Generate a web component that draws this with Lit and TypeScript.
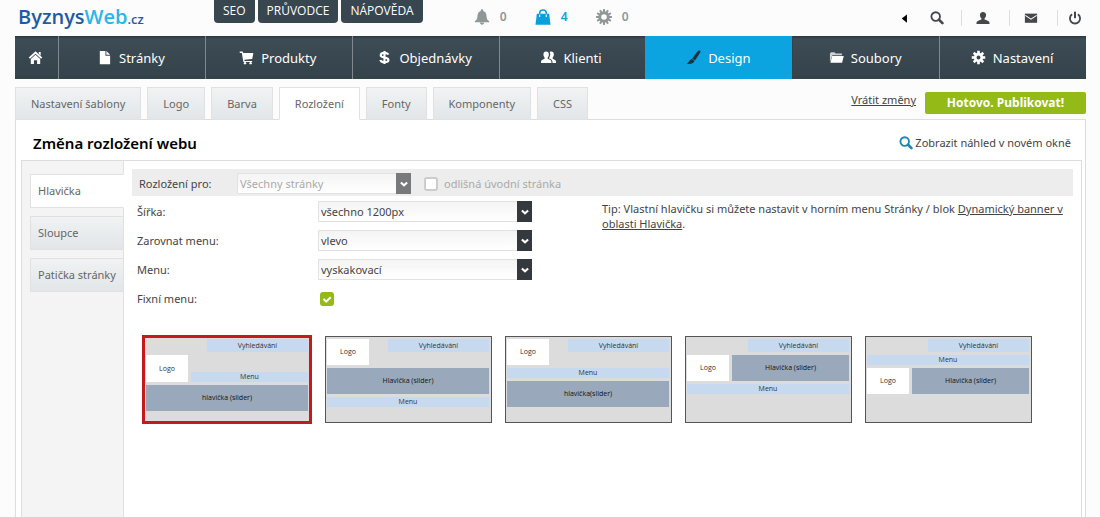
import { LitElement, html, css, svg, nothing } from "lit";
import { customElement, property, state } from "lit/decorators.js";
import { classMap } from "lit/directives/class-map.js";

const gearTeeth = (count: number, inner: number, outer: number, half: number) =>
  Array.from({ length: count }, (_, i) => {
    const a = (i * 360) / count;
    return svg`<rect x=${-half} y=${-outer} width=${half * 2} height=${outer - inner} transform="translate(8 8) rotate(${a})" />`;
  });

const icons: Record<string, unknown> = {
  home: svg`<path d="M8 1.2 15.2 8l-1.3 1.4L8 3.9 2.1 9.4.8 8z"/><path d="M8 5.1l5 4.6V15H9.7v-4H6.3v4H3V9.7z"/><path d="M11.5 2h2v4l-2-2z"/>`,
  page: svg`<path d="M3 1h6v5h5v9.2H3z"/><path d="M10 1l4 4h-4z"/>`,
  cart: svg`<path d="M.8 1.5h3l.9 1.8h10.6l-1.2 6.2-8.4.9.3 1.2h8v1.3H4.7L3 3.2H.8z"/><circle cx="6.4" cy="14" r="1.3"/><circle cx="12.4" cy="14" r="1.3"/>`,
  dollar: svg`<path d="M8 1v14M12 5C11.500 3.600 10 3 8 3 5.500 3 4 4 4 5.500 4 7.300 6 7.600 8 8c2.200.400 4.200.800 4.200 2.600C12.200 12.200 10.500 13 8 13c-2.300 0-4-.700-4.400-2.400" fill="none" stroke="currentColor" stroke-width="2.300"/>`,
  people: svg`<path d="M5.500 1.700c2 0 2.900 1.400 2.900 3.100 0 1.300-.5 2.400-1.200 3.100v1.300c1.600.7 3.300 1.200 3.700 2.300.2.700.2 1.500.2 2.300H0c0-.8 0-1.600.2-2.300.4-1.100 2-1.600 3.600-2.300V7.900C3.100 7.200 2.600 6.100 2.600 4.800c0-1.700.9-3.100 2.900-3.100z"/><path d="M9.300 2.100c.4-.3.900-.4 1.500-.4 2 0 2.900 1.400 2.900 3.100 0 1.300-.5 2.400-1.200 3.100v1.300c1.400.7 2.900 1.200 3.300 2.300.2.700.2 1.500.2 2.300h-3.700c0-3-.7-3.500-3.600-4.800V8.300c1.400-2 1.500-4.300.6-6.200z"/>`,
  brush: svg`<path d="M15 .8c.8.500.5 1.200 0 2.200l-5.200 8-3.400-1.800L12 1.900c1-1.100 2-1.800 3-1.100zM6 9.600l3.200 1.900C8 14.300 5 15.600.6 14.800c2.700-1 2.700-4.400 5.400-5.200z"/>`,
  folder: svg`<path d="M1 13V3.600L2.200 2.500h3.600l1.300 1.300h6.700V5.500H3.600z" opacity=".75"/><path d="M3.400 6.400h12.300L14 13.500H1.500z"/>`,
  gear: svg`<path fill-rule="evenodd" d="M8 3a5 5 0 100 10A5 5 0 008 3zm0 2.900a2.100 2.100 0 110 4.200 2.100 2.100 0 010-4.200z"/>${gearTeeth(8, 4, 7.2, 1.4)}`,
  cog: svg`<path fill-rule="evenodd" d="M8 2.200a5.800 5.800 0 100 11.600A5.800 5.800 0 008 2.200zm0 3a2.800 2.800 0 110 5.600 2.800 2.800 0 010-5.600z"/>${gearTeeth(12, 5, 7.900, 1)}`,
  bell: svg`<path d="M8 .3c.8 0 1.200.5 1.200 1.200v.4c2.300.6 3.200 2.500 3.300 5 .1 2.600.8 4 2.700 5.300v1H.8v-1c1.900-1.300 2.600-2.700 2.700-5.300.1-2.500 1-4.400 3.300-5v-.4C6.800.8 7.200.3 8 .3z"/><path d="M6 13.600h4c0 1.300-.8 2.100-2 2.100s-2-.8-2-2.100z"/>`,
  bag: svg`<path d="M1.800 4.800h12.400l1.300 11H.5z"/><path d="M4.700 7.400V3.900C4.700 1.900 6 .9 8 .9s3.300 1 3.300 3v3.500" fill="none" stroke="currentColor" stroke-width="1.500"/><path d="M4.700 5.400v2.600M11.300 5.400v2.600" stroke="#fcfcfc" stroke-width="1.100"/>`,
  left: svg`<path d="M11.500 2v12L4 8z"/>`,
  search: svg`<circle cx="6.500" cy="6.300" r="4.900" fill="none" stroke="currentColor" stroke-width="2.100"/><path d="M10.300 10l3.900 3.900" stroke="currentColor" stroke-width="3" stroke-linecap="round"/>`,
  user: svg`<path d="M8 1c2.300 0 3.500 1.500 3.500 3.500 0 1.700-.7 3.100-1.700 3.900v1.200c2.300 1 5 1.500 5.400 3 .2.700.3 1.500.3 2.200H.5c0-.7.1-1.500.3-2.200.4-1.500 3.100-2 5.400-3V8.400c-1-.8-1.700-2.200-1.700-3.900C4.500 2.500 5.700 1 8 1z"/>`,
  mail: svg`<path d="M1 3h14v10.500H1z"/><path d="M1.500 5L8 9.300 14.500 5" fill="none" stroke="#fcfcfc" stroke-width="1.200"/>`,
  power: svg`<path d="M4.700 3.700A5.800 5.800 0 1 0 11.300 3.700" fill="none" stroke="currentColor" stroke-width="2.100"/><path d="M8 .8v7.400" stroke="currentColor" stroke-width="2.300"/>`,
  chevron: svg`<path d="M3 5.500L8 10l5-4.500" fill="none" stroke="currentColor" stroke-width="3.400"/>`,
};

const icon = (name: string, cls = "") =>
  html`<svg class="icon ${cls}" viewBox="0 0 16 16" fill="currentColor" aria-hidden="true">${icons[name]}</svg>`;

const iconStyles = css`
  .icon {
    width: 16px;
    height: 16px;
    flex: none;
    display: block;
  }
`;

/** Miniature of one header arrangement; the variant picks the grid areas. */
@customElement("layout-thumb")
export class LayoutThumb extends LitElement {
  @property({ type: Number }) variant = 1;
  @property() slider = "Hlavička (slider)";

  static styles = css`
    :host {
      display: block;
    }
    .map {
      display: grid;
      grid-template-columns: 42px 3px 16px 1fr;
      row-gap: 3px;
      font-family: "Open Sans", sans-serif;
      font-size: 7px;
      line-height: 10px;
      color: #333;
    }
    .map > span {
      display: flex;
      align-items: center;
      justify-content: center;
    }
    .search { grid-area: search; background: #c6d9ee; }
    .logo { grid-area: logo; background: #fff; }
    .menu { grid-area: menu; background: #c6d9ee; }
    .slider { grid-area: slider; background: #99a8ba; color: #111; }
    .v1 {
      grid-template-rows: 13px 14px 10px 26px;
      grid-template-areas: ". . . search" "logo . . ." "logo . menu menu" "slider slider slider slider";
    }
    .v2 {
      grid-template-rows: 13px 10px 26px 10px;
      grid-template-areas: "logo . . search" "logo . . ." "slider slider slider slider" "menu menu menu menu";
    }
    .v3 {
      grid-template-rows: 13px 10px 10px 26px;
      grid-template-areas: "logo . . search" "logo . . ." "menu menu menu menu" "slider slider slider slider";
    }
    .v4 {
      grid-template-rows: 13px 26px 10px;
      grid-template-areas: ". . . search" "logo . slider slider" "menu menu menu menu";
    }
    .v5 {
      grid-template-rows: 13px 10px 26px;
      grid-template-areas: ". . . search" "menu menu menu menu" "logo . slider slider";
    }
  `;

  render() {
    return html`<div class="map v${this.variant}">
      <span class="search">Vyhledávání</span>
      <span class="logo">Logo</span>
      <span class="menu">Menu</span>
      <span class="slider">${this.slider}</span>
    </div>`;
  }
}

@customElement("app-root")
export class AppRoot extends LitElement {
  @state() private chosen = 1;

  private nav = [
    ["page", "Stránky"],
    ["cart", "Produkty"],
    ["dollar", "Objednávky"],
    ["people", "Klienti"],
    ["brush", "Design"],
    ["folder", "Soubory"],
    ["gear", "Nastavení"],
  ];
  private tabs = ["Nastavení šablony", "Logo", "Barva", "Rozložení", "Fonty", "Komponenty", "CSS"];
  private sections = ["Hlavička", "Sloupce", "Patička stránky"];
  private fields = [
    ["width", "Šířka:", "všechno 1200px"],
    ["align", "Zarovnat menu:", "vlevo"],
    ["menu", "Menu:", "vyskakovací"],
  ];
  private sliders = ["hlavička (slider)", "Hlavička (slider)", "hlavička(slider)", "Hlavička (slider)", "Hlavička (slider)"];

  static styles = [
    iconStyles,
    css`
      :host {
        display: flex;
        flex-direction: column;
        box-sizing: border-box;
        min-height: 100vh;
        padding: 0 14px 0 15px;
        background: #fcfcfc;
        color: #444;
        font-family: "Noto Sans", "Open Sans", sans-serif;
        font-size: 11px;
        line-height: 16px;
      }
      * { box-sizing: border-box; }
      a { color: inherit; text-decoration: none; }
      button, select, input { font: inherit; color: inherit; margin: 0; }

      .top { display: flex; height: 36px; font-size: 12px; }
      .brand {
        width: 199px;
        padding: 3px 0 0 3px;
        font-family: "Open Sans", sans-serif;
        font-size: 20px;
        font-weight: 600;
        line-height: 28px;
        color: #1d5ba6;
      }
      .brand .web { color: #2cb5e8; }
      .brand .tld { font-size: 13px; }
      .chips { display: flex; gap: 3px; align-items: flex-start; }
      .chip {
        height: 23px;
        padding: 0 9px;
        border-radius: 0 0 4px 4px;
        background: #37464f;
        color: #fff;
        font-family: "Open Sans", sans-serif;
        line-height: 22px;
      }
      .counts { display: flex; margin-left: 51px; padding-top: 9px; }
      .count {
        display: flex;
        gap: 10px;
        width: 61px;
        color: #8f9799;
        font-weight: 600;
      }
      .count.on { color: #0ba0dd; }
      .tools { display: flex; align-items: center; margin-left: auto; color: #45484b; }
      .tool { display: flex; align-items: center; justify-content: center; height: 16px; }
      .tool .icon { width: 14px; height: 14px; }
      .tool.arrow { width: 32px; color: #000; }
      .tool.arrow .icon { width: 11px; height: 11px; }
      .tool.find { width: 41px; padding-right: 8px; }
      .tool.framed { width: 48px; border-left: 1px solid #ddd; padding-right: 5px; }
      .tool.end { border-left: 1px solid #ddd; padding: 0 4px 0 10px; }

      .nav { display: grid; grid-template-columns: 43px repeat(7, 1fr); height: 43px; }
      .nav a {
        display: flex;
        align-items: center;
        justify-content: center;
        gap: 7px;
        padding-right: 2px;
        border-left: 1px solid #82898e;
        background: linear-gradient(#2a373f, #3d4c55 3px, #34424a);
        color: #fff;
        font-size: 13px;
      }
      .nav a:first-child { border-left: 0; }
      .nav a.on { background: #0ba3e0; border-color: #0ba3e0; }
      .nav a.on + a { border-color: #34424a; }
      .nav .icon { width: 15px; height: 15px; }
      .nav .icon.brush { color: #1d3340; }

      .bar { display: flex; align-items: flex-start; height: 40px; padding-top: 8px; }
      .tabs { display: flex; gap: 6px; height: 33px; position: relative; }
      .tab {
        padding: 0 15px;
        border: 1px solid #dfe1e2;
        background: linear-gradient(#f1f3f4, #e2e6e9);
        color: #666;
        line-height: 32px;
      }
      .tab.on { background: #fff; border-bottom-color: #fff; }
      .actions { display: flex; gap: 9px; margin-left: auto; padding-top: 5px; }
      .undo { text-decoration: underline; }
      .publish {
        width: 161px;
        height: 22px;
        padding: 0;
        border: 0;
        border-radius: 2px;
        background: #94ba17;
        color: #fff;
        font-weight: 700;
        font-size: 12px;
      }

      .panel {
        flex: 1;
        display: flex;
        flex-direction: column;
        border: 1px solid #ddd;
        border-bottom: 0;
        background: #fff;
        padding: 0 3px 0 5px;
      }
      .head { display: flex; align-items: center; justify-content: space-between; height: 40px; padding: 6px 11px 0 12px; }
      h1 { margin: 0; color: #000; font-size: 15px; font-weight: 600; line-height: 20px; }
      .preview { display: flex; align-items: center; gap: 2px; }
      .preview .icon { width: 14px; height: 14px; color: #1d85b8; }
      .body { flex: 1; display: flex; border: 1px solid #ddd; border-bottom: 0; }
      .side {
        width: 102px;
        padding: 13px 0 0 8px;
        display: flex;
        flex-direction: column;
        gap: 8px;
        background: #f4f4f4;
        border-right: 1px solid #e2e2e2;
      }
      .side a {
        height: 34px;
        margin-right: -1px;
        padding-left: 7px;
        border: 1px solid #dfe1e2;
        background: linear-gradient(#f0f2f3, #e2e6e9);
        color: #666;
        line-height: 32px;
        white-space: nowrap;
      }
      .side a.on { background: #fff; border-right-color: #fff; }
      .main { flex: 1; padding: 8px 8px 0; }
      .scope {
        display: flex;
        align-items: center;
        height: 27px;
        padding: 2px 0 0 7px;
        background: #ededed;
      }
      .scope > label:first-child { width: 98px; }
      .pick { display: grid; height: 21px; }
      .pick > * { grid-area: 1 / 1; }
      .pick select {
        appearance: none;
        width: 100%;
        height: 21px;
        padding: 0 20px 0 2px;
        border: 1px solid #e2e2e2;
        border-radius: 0;
        background: linear-gradient(#f4f4f4, #fff);
        opacity: 1;
      }
      .pick .arrow {
        justify-self: end;
        display: grid;
        place-items: center;
        width: 15px;
        background: #33393c;
        color: #fff;
        pointer-events: none;
      }
      .pick .arrow .icon { width: 10px; height: 10px; }
      .pick.off { width: 174px; color: #aaa; }
      .pick.off .arrow { background: #77797a; }
      .other { display: flex; align-items: center; gap: 6px; margin-left: 13px; color: #aaa; }
      .check { appearance: none; width: 14px; height: 14px; border: 2px solid #ccc; border-radius: 3px; background: #fff; }
      .tick { display: grid; width: 14px; height: 14px; margin-left: 2px; }
      .tick > * { grid-area: 1 / 1; }
      .tick input { appearance: none; width: 14px; height: 14px; border-radius: 3px; background: #94ba17; }
      .tick .icon { width: 14px; height: 14px; color: #fff; pointer-events: none; }

      .settings { display: flex; gap: 70px; padding: 5px 10px 0 5px; }
      .form { display: grid; grid-template-columns: 181px 214px; grid-auto-rows: 21px; row-gap: 8px; align-items: center; }
      .tip { flex: 1; margin: 0; line-height: 15px; }
      .tip a { text-decoration: underline; }

      .cards { display: flex; flex-wrap: wrap; align-items: center; gap: 13px; padding: 26px 0 0 10px; }
      .card {
        width: 167px;
        height: 87px;
        padding: 2px 2px 0 1px;
        border: 1px solid #555;
        background: #dcdcdc;
        text-align: center;
        display: block;
      }
      .card.on { width: 170px; height: 89px; padding: 1px; border: 3px solid #c41a1d; }
      .card layout-thumb { height: 83px; }
      .card.on layout-thumb { height: 81px; }
    `,
  ];

  private select(id: string, value: string, off = false) {
    return html`<div class=${classMap({ pick: true, off })}>
      <select id=${id} ?disabled=${off}><option>${value}</option></select>
      <span class="arrow">${icon("chevron")}</span>
    </div>`;
  }

  render() {
    return html`
      <header class="top">
        <a class="brand" href="#">Byznys<span class="web">Web</span><span class="tld">.cz</span></a>
        <div class="chips">
          ${["SEO", "PRŮVODCE", "NÁPOVĚDA"].map((t) => html`<a class="chip" href="#">${t}</a>`)}
        </div>
        <div class="counts">
          <a class="count" href="#">${icon("bell")}0</a>
          <a class="count on" href="#">${icon("bag")}4</a>
          <a class="count" href="#">${icon("cog")}0</a>
        </div>
        <div class="tools">
          <a class="tool arrow" href="#" aria-label="Zpět">${icon("left")}</a>
          <a class="tool find" href="#" aria-label="Hledat">${icon("search")}</a>
          <a class="tool framed" href="#" aria-label="Účet">${icon("user")}</a>
          <a class="tool framed" href="#" aria-label="Zprávy">${icon("mail")}</a>
          <a class="tool end" href="#" aria-label="Odhlásit">${icon("power")}</a>
        </div>
      </header>
      <nav class="nav">
        <a href="#" aria-label="Domů">${icon("home")}</a>
        ${this.nav.map(
          ([glyph, text]) => html`<a href="#" class=${text === "Design" ? "on" : nothing}>${icon(glyph, glyph)}${text}</a>`
        )}
      </nav>
      <div class="bar">
        <div class="tabs">
          ${this.tabs.map((t) => html`<a href="#" class=${classMap({ tab: true, on: t === "Rozložení" })}>${t}</a>`)}
        </div>
        <div class="actions">
          <a class="undo" href="#">Vrátit změny</a>
          <button class="publish">Hotovo. Publikovat!</button>
        </div>
      </div>
      <main class="panel">
        <div class="head">
          <h1>Změna rozložení webu</h1>
          <a class="preview" href="#">${icon("search")}Zobrazit náhled v novém okně</a>
        </div>
        <div class="body">
          <nav class="side">
            ${this.sections.map((t, i) => html`<a href="#" class=${i === 0 ? "on" : nothing}>${t}</a>`)}
          </nav>
          <section class="main">
            <div class="scope">
              <label for="scope">Rozložení pro:</label>
              ${this.select("scope", "Všechny stránky", true)}
              <label class="other"><input class="check" type="checkbox" disabled />odlišná úvodní stránka</label>
            </div>
            <div class="settings">
              <div class="form">
                ${this.fields.map(([id, label, value]) => html`<label for=${id}>${label}</label>${this.select(id, value)}`)}
                <label for="fixed">Fixní menu:</label>
                <span class="tick">
                  <input id="fixed" type="checkbox" checked />
                  <svg class="icon" viewBox="0 0 14 14" aria-hidden="true">
                    <path d="M3.500 7l2.700 2.700 4.500-4.500" fill="none" stroke="currentColor" stroke-width="2" />
                  </svg>
                </span>
              </div>
              <p class="tip">
                Tip: Vlastní hlavičku si můžete nastavit v horním menu Stránky / blok
                <a href="#">Dynamický banner v oblasti Hlavička</a>.
              </p>
            </div>
            <div class="cards">
              ${this.sliders.map(
                (text, i) => html`<button
                  class=${classMap({ card: true, on: this.chosen === i + 1 })}
                  aria-pressed=${this.chosen === i + 1}
                  @click=${() => (this.chosen = i + 1)}
                >
                  <layout-thumb .variant=${i + 1} .slider=${text}></layout-thumb>
                </button>`
              )}
            </div>
          </section>
        </div>
      </main>
    `;
  }
}
